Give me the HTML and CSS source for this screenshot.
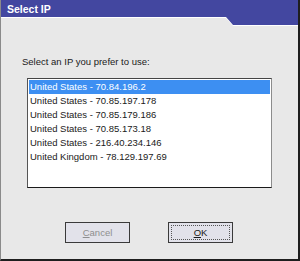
FILE: index.html
```html
<!DOCTYPE html>
<html lang="en">
<head>
  <meta charset="UTF-8" />
  <title>Select IP</title>
  <link rel="stylesheet" href="styles.css">
</head>
<body>

  <div class="window">
    <div class="titlebar">
      <div class="titlebar-inner">Select IP</div>
    </div>

    <div class="content">
      <div class="prompt">Select an IP you prefer to use:</div>

      <ul class="ip-list">
        <li class="selected">United States - 70.84.196.2</li>
        <li>United States - 70.85.197.178</li>
        <li>United States - 70.85.179.186</li>
        <li>United States - 70.85.173.18</li>
        <li>United States - 216.40.234.146</li>
        <li>United Kingdom - 78.129.197.69</li>
      </ul>

      <div class="buttons">
        <button class="btn disabled"><u>C</u>ancel</button>
        <button class="btn default"><span class="focus"><u>O</u>K</span></button>
      </div>
    </div>
  </div>

</body>
</html>
```

FILE: styles.css
```css
* {
  box-sizing: border-box;
}

body {
  margin: 0;
  font-family: 'Liberation Sans', Arial, sans-serif;
  font-size: 9.5px;
  color: #1a1a1a;
}

.window {
  width: 300px;
  height: 261px;
  background: #e8e8e8;
  border-left: 1px solid #8a8a8a;
  border-right: 2px solid #1e1e1e;
  border-bottom: 2px solid #1e1e1e;
  display: flex;
  flex-direction: column;
}

.titlebar {
  height: 26px;
  background: #ffffff;
  clip-path: polygon(0 0, 100% 0, 100% 26px, 232px 26px, 225px 18px, 0 18px);
}

.titlebar-inner {
  height: 25px;
  background: #4347a0;
  color: #ffffff;
  font-weight: bold;
  font-size: 10.5px;
  padding: 3px 0 0 6px;
  clip-path: polygon(0 0, 100% 0, 100% 25px, 232px 25px, 225px 17px, 0 17px);
}

.content {
  padding: 30px 0 0 21px;
}

.prompt {
  line-height: 12px;
}

.ip-list {
  list-style: none;
  margin: 10px 0 0 5px;
  padding: 1px;
  width: 245px;
  height: 110px;
  background: #ffffff;
  border: 1px solid #1a1a1a;
  border-left-color: #555555;
  border-top-color: #444444;
  border-right-color: #8c8c8c;
}

.ip-list li {
  height: 14px;
  line-height: 14px;
  padding-left: 1px;
}

.ip-list li.selected {
  background: #3d8ff2;
  color: #ffffff;
}

.buttons {
  display: flex;
  gap: 38px;
  margin: 34px 0 0 43px;
}

.btn {
  width: 65px;
  height: 21px;
  padding: 0;
  font-family: inherit;
  font-size: 9.5px;
  background: #e2e2ea;
  border: 1px solid #3a3a3a;
  border-radius: 0;
  color: #1a1a1a;
}

.btn.disabled {
  color: #8e8e8e;
}

.btn.default {
  padding: 2px;
}

.focus {
  display: flex;
  align-items: center;
  justify-content: center;
  height: 100%;
  border: 1px dotted #555555;
}
```
